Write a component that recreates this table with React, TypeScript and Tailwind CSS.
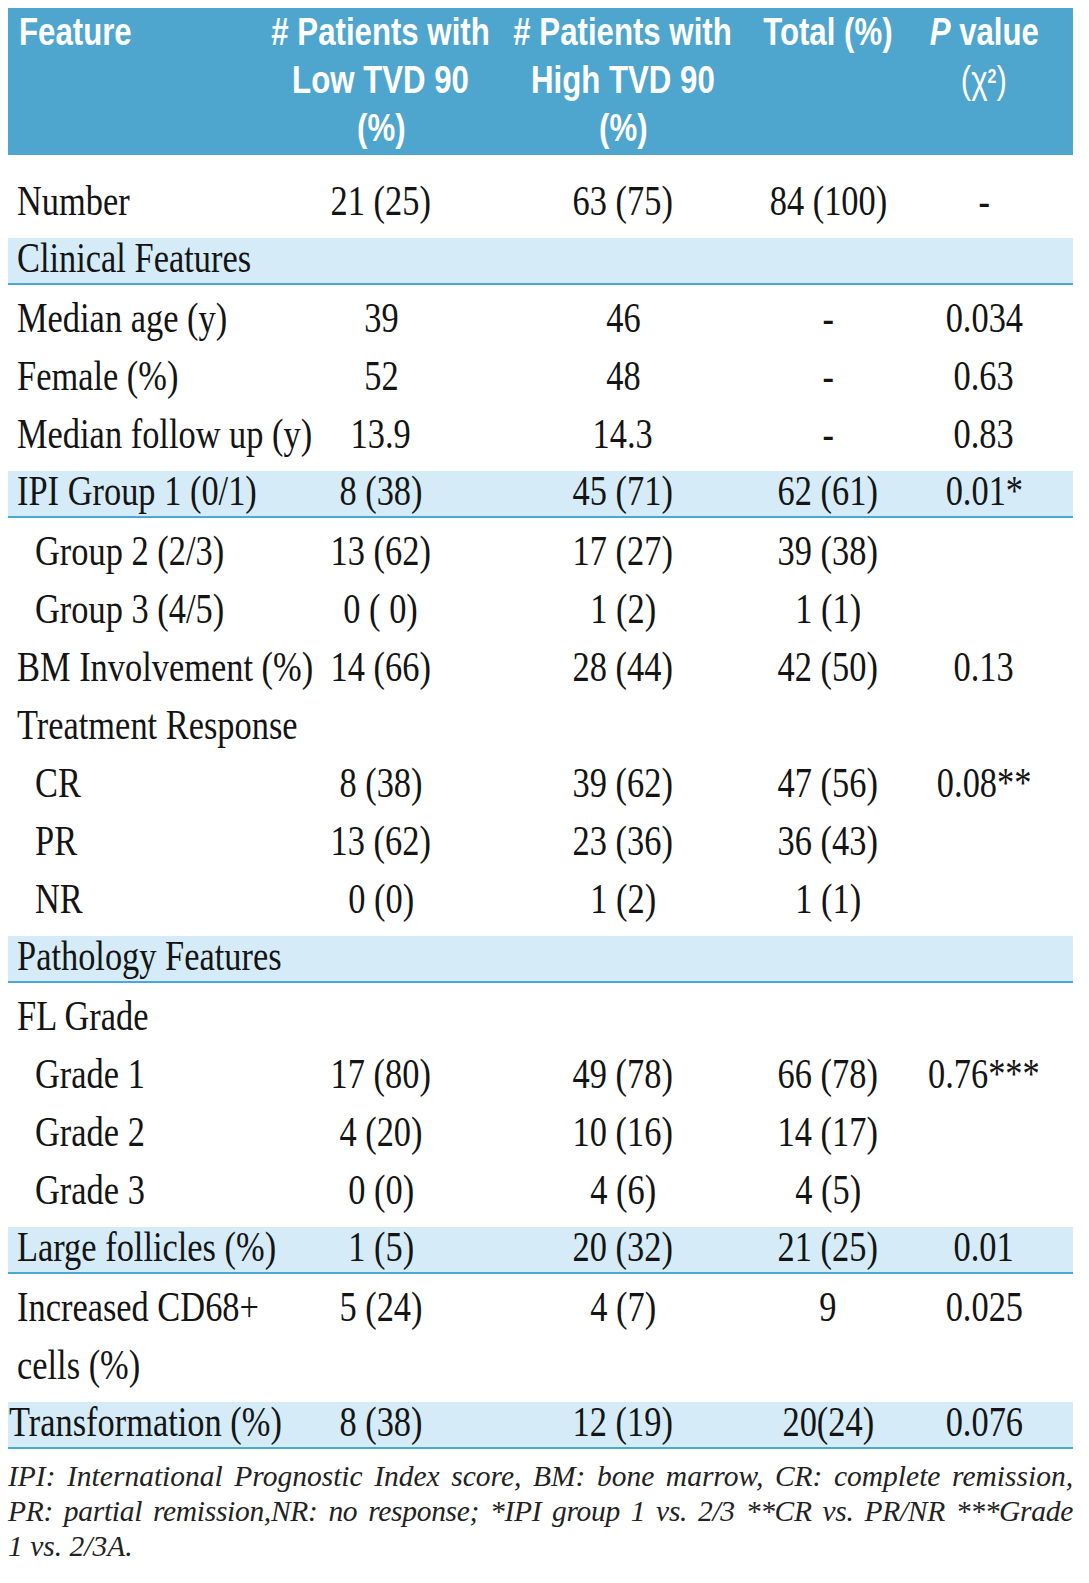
import React from "react";

type Row = {
  label: string;
  c?: [string, string, string, string];
  band?: boolean;
  pad?: "norm" | "ind" | "out";
};

const rows: Row[] = [
  { label: "Number", c: ["21 (25)", "63 (75)", "84 (100)", "-"] },
  { label: "Clinical Features", band: true },
  { label: "Median age (y)", c: ["39", "46", "-", "0.034"] },
  { label: "Female (%)", c: ["52", "48", "-", "0.63"] },
  { label: "Median follow up (y)", c: ["13.9", "14.3", "-", "0.83"] },
  { label: "IPI Group 1 (0/1)", c: ["8 (38)", "45 (71)", "62 (61)", "0.01*"], band: true },
  { label: "Group 2 (2/3)", c: ["13 (62)", "17 (27)", "39 (38)", ""], pad: "ind" },
  { label: "Group 3 (4/5)", c: ["0 ( 0)", "1 (2)", "1 (1)", ""], pad: "ind" },
  { label: "BM Involvement (%)", c: ["14 (66)", "28 (44)", "42 (50)", "0.13"] },
  { label: "Treatment Response" },
  { label: "CR", c: ["8 (38)", "39 (62)", "47 (56)", "0.08**"], pad: "ind" },
  { label: "PR", c: ["13 (62)", "23 (36)", "36 (43)", ""], pad: "ind" },
  { label: "NR", c: ["0 (0)", "1 (2)", "1 (1)", ""], pad: "ind" },
  { label: "Pathology Features", band: true },
  { label: "FL Grade" },
  { label: "Grade 1", c: ["17 (80)", "49 (78)", "66 (78)", "0.76***"], pad: "ind" },
  { label: "Grade 2", c: ["4 (20)", "10 (16)", "14 (17)", ""], pad: "ind" },
  { label: "Grade 3", c: ["0 (0)", "4 (6)", "4 (5)", ""], pad: "ind" },
  { label: "Large follicles (%)", c: ["1 (5)", "20 (32)", "21 (25)", "0.01"], band: true },
  { label: "Increased CD68+", c: ["5 (24)", "4 (7)", "9", "0.025"] },
  { label: "cells (%)" },
  { label: "Transformation (%)", c: ["8 (38)", "12 (19)", "20(24)", "0.076"], band: true, pad: "out" },
];

function BodyRow({ r, first }: { r: Row; first: boolean }) {
  const padClass = r.pad === "ind" ? "pl-[27px]" : r.pad === "out" ? "pl-px" : "pl-[9px]";
  const rowClass = r.band
    ? "mt-2 mb-1 h-[47px] border-b-2 border-[#4aa8d4] bg-[#d5ecf8] leading-[40px]"
    : "h-[58px] leading-[58px]";
  return (
    <div
      className={`grid w-full grid-cols-[254px_238px_246px_164px_148px] ${rowClass} ${
        first ? "mt-[17px]" : ""
      }`}
    >
      <div className={padClass}>
        <span className="inline-block origin-left scale-x-[0.8] whitespace-nowrap">{r.label}</span>
      </div>
      {(r.c ?? ["", "", "", ""]).map((v, i) => (
        <div key={i} className="flex justify-center">
          <span className="inline-block scale-x-[0.8] whitespace-nowrap">{v}</span>
        </div>
      ))}
    </div>
  );
}

function HeadCol({ lines }: { lines: React.ReactNode[] }) {
  return (
    <div className="flex flex-col items-center">
      {lines.map((l, i) => (
        <span key={i} className="inline-block scale-x-[0.8] whitespace-nowrap">
          {l}
        </span>
      ))}
    </div>
  );
}

export default function App() {
  return (
    <div className="min-h-[1583px] w-[1089px] bg-white">
      <div className="ml-2 w-[1065px] pt-2">
        <div className="grid h-[147px] grid-cols-[254px_238px_246px_164px_148px] bg-[#4ea6ce] font-['Liberation_Sans',sans-serif] text-[39px] font-bold leading-[48px] text-white">
          <div className="pl-[11px]">
            <span className="inline-block origin-left scale-x-[0.8]">Feature</span>
          </div>
          <HeadCol lines={["# Patients with", "Low TVD 90", "(%)"]} />
          <HeadCol lines={["# Patients with", "High TVD 90", "(%)"]} />
          <HeadCol lines={["Total (%)"]} />
          <HeadCol
            lines={[
              <>
                <span className="italic">P</span> value
              </>,
              <>
                <span className="font-normal">(χ</span>
                <sup className="text-[20px] font-bold">2</sup>
                <span className="font-normal">)</span>
              </>,
            ]}
          />
        </div>
        <div className="font-['Liberation_Serif',serif] text-[43px] text-[#141414]">
          {rows.map((r, i) => (
            <BodyRow key={i} r={r} first={i === 0} />
          ))}
        </div>
        <div className="mt-[10px] font-['Liberation_Serif',serif] text-[29.5px] italic leading-[35px] text-[#222]">
          <div className="text-justify [text-align-last:justify]">
            IPI: International Prognostic Index score, BM: bone marrow, CR: complete remission,
          </div>
          <div className="text-justify tracking-[-0.3px] [text-align-last:justify]">
            PR: partial remission,NR: no response; *IPI group 1 vs. 2/3 **CR vs. PR/NR ***Grade
          </div>
          <div>1 vs. 2/3A.</div>
        </div>
      </div>
    </div>
  );
}
